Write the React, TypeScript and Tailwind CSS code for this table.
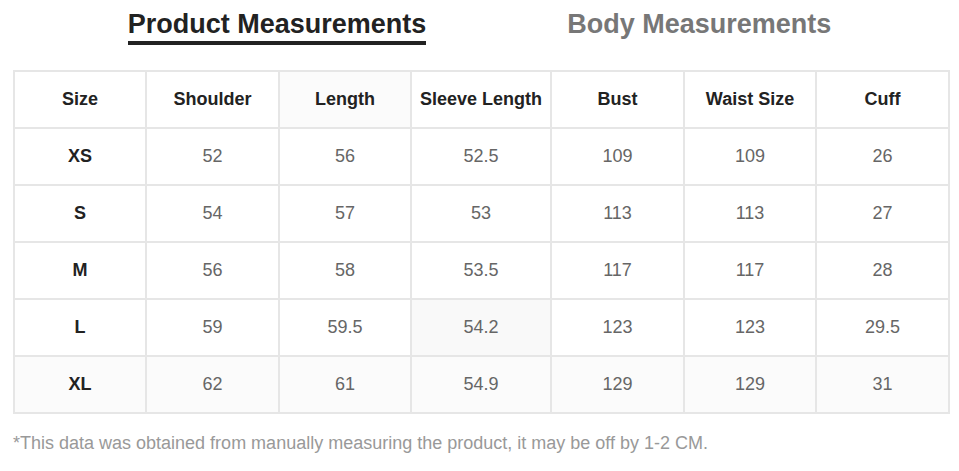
import React from 'react'

const headers = ['Size', 'Shoulder', 'Length', 'Sleeve Length', 'Bust', 'Waist Size', 'Cuff']
const widths = ['w-[132px]', 'w-[133px]', 'w-[132px]', 'w-[140px]', 'w-[133px]', 'w-[132px]', 'w-[133px]']

const rows = [
  ['XS', '52', '56', '52.5', '109', '109', '26'],
  ['S', '54', '57', '53', '113', '113', '27'],
  ['M', '56', '58', '53.5', '117', '117', '28'],
  ['L', '59', '59.5', '54.2', '123', '123', '29.5'],
  ['XL', '62', '61', '54.9', '129', '129', '31'],
]

export default function App() {
  return (
    <div className="w-[959px] h-[471px] bg-white font-['Liberation_Sans',Arial,sans-serif] overflow-hidden">
      <div className="flex justify-center gap-[141px] pt-[8px]">
        <button className="text-[27px] font-bold text-[#222] leading-[32px] pb-[1px] border-b-4 border-[#222]">
          Product Measurements
        </button>
        <button className="text-[27px] font-bold text-[#777] leading-[32px] pb-[1px] border-b-4 border-transparent">
          Body Measurements
        </button>
      </div>

      <div className="px-[13px] pt-[25px]">
        <table className="w-[935px] table-fixed border-collapse border-2 border-[#e6e6e6]">
          <thead>
            <tr className="h-[57px]">
              {headers.map((h, i) => (
                <th
                  key={h}
                  className={`${widths[i]} border-2 border-[#e6e6e6] text-[18px] font-bold text-[#222] text-center ${
                    i === 2 ? 'bg-[#fbfbfb]' : ''
                  }`}
                >
                  {h}
                </th>
              ))}
            </tr>
          </thead>
          <tbody>
            {rows.map((row, r) => (
              <tr key={row[0]} className={r === 4 ? 'h-[57px] bg-[#fbfbfb]' : 'h-[57px]'}>
                {row.map((cell, i) => (
                  <td
                    key={i}
                    className={
                      i === 0
                        ? 'border-2 border-[#e6e6e6] text-[18px] font-bold text-[#222] text-center'
                        : `border-2 border-[#e6e6e6] text-[18px] text-[#666] text-center ${
                            r === 3 && i === 3 ? 'bg-[#f9f9f9]' : ''
                          }`
                    }
                  >
                    {cell}
                  </td>
                ))}
              </tr>
            ))}
          </tbody>
        </table>
        <p className="mt-[17px] text-[18px] text-[#999] leading-[24px]">
          *This data was obtained from manually measuring the product, it may be off by 1-2 CM.
        </p>
      </div>
    </div>
  )
}
